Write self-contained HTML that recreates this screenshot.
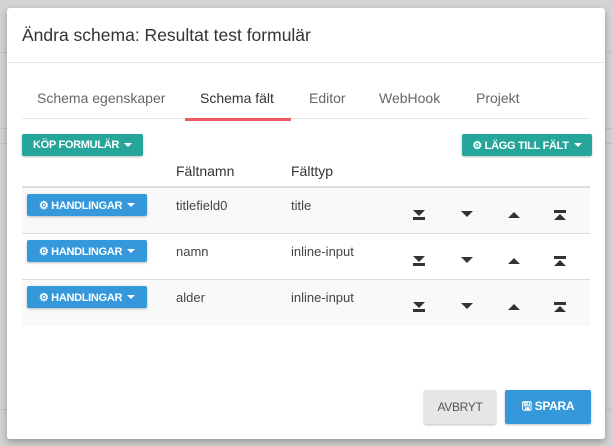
<!DOCTYPE html>
<html><head><meta charset="utf-8"><style>
body{margin:0;width:613px;height:446px;background:#d4d4d4;font-family:"Liberation Sans",sans-serif;position:relative;overflow:hidden}
.bgl{position:absolute;left:0;right:0;height:1px;background:#c4c4c4}
.modal{position:absolute;left:7px;top:8px;width:598px;height:431px;background:#fff;border-radius:3px;box-shadow:0 3px 8px rgba(0,0,0,.3)}
.a{position:absolute}
.hdr{left:0;top:0;width:598px;height:54px;border-bottom:1px solid #e8e8e8}
.title{left:15px;top:17px;font-size:17.5px;color:#333}
.tab{top:82px;font-size:14px;color:#666}
.btn{position:absolute;color:#fff;font-weight:bold;font-size:11px;border-radius:2px;box-shadow:0 1px 2px rgba(0,0,0,.25);display:flex;align-items:center;justify-content:center;gap:4px;letter-spacing:-.3px}
.teal{background:#26a69a}.blue{background:#3498db}
.car{display:inline-block;border-left:4px solid transparent;border-right:4px solid transparent;border-top:4px solid #fff;margin-left:1px}
.row{position:absolute;left:15px;width:568px;height:46px}
.cell{position:absolute;font-size:13px;color:#444}
</style></head><body>
<div class="bgl" style="top:52px"></div><div class="bgl" style="top:128px"></div><div class="bgl" style="top:143px"></div><div class="bgl" style="top:409px"></div>
<div class="modal">
<div class="a hdr"></div>
<div class="a title">Ändra schema: Resultat test formulär</div>
<div class="a" style="left:15px;top:110px;width:568px;height:1px;background:#e8e8e8"></div>
<div class="a tab" style="left:30px">Schema egenskaper</div>
<div class="a tab" style="left:193px;color:#333">Schema fält</div>
<div class="a tab" style="left:302px">Editor</div>
<div class="a tab" style="left:372px">WebHook</div>
<div class="a tab" style="left:469px">Projekt</div>
<div class="a" style="left:178px;top:110px;width:106px;height:3px;background:#ee5a5f"></div>
<div class="btn teal" style="left:15px;top:126px;width:121px;height:22px">KÖP FORMULÄR<span class="car"></span></div>
<div class="btn teal" style="left:455px;top:126px;width:130px;height:22px">⚙ LÄGG TILL FÄLT<span class="car"></span></div>
<div class="cell" style="left:169px;top:155px;font-size:14px;color:#333">Fältnamn</div>
<div class="cell" style="left:284px;top:155px;font-size:14px;color:#333">Fälttyp</div>
<div class="a" style="left:15px;top:178px;width:568px;height:2px;background:#ddd"></div>
<div class="row" style="top:180px;background:#f9f9f9;border-bottom:1px solid #ddd;height:45px"></div>
<div class="row" style="top:226px;border-bottom:1px solid #ddd;height:45px"></div>
<div class="row" style="top:272px;background:#f9f9f9"></div>
<script>
var ys=[180,226,272],n=["titlefield0","namn","alder"],t=["title","inline-input","inline-input"],h="";
for(var i=0;i<3;i++){var y=ys[i];
h+='<div class="btn blue" style="left:20px;top:'+(y+6)+'px;width:120px;height:22px">⚙ HANDLINGAR<span class="car"></span></div>';
h+='<div class="cell" style="left:169px;top:'+(y+10)+'px">'+n[i]+'</div><div class="cell" style="left:284px;top:'+(y+10)+'px">'+t[i]+'</div>';
var iy=y+22;
h+='<svg class="a" style="left:405px;top:'+iy+'px" width="14" height="10"><path d="M1 0h12L7 6zM1 7h12v3H1z" fill="#333"/></svg>';
h+='<svg class="a" style="left:453px;top:'+iy+'px" width="14" height="10"><path d="M1 1h12L7 7z" fill="#333"/></svg>';
h+='<svg class="a" style="left:500px;top:'+iy+'px" width="14" height="10"><path d="M1 8h12L7 2z" fill="#333"/></svg>';
h+='<svg class="a" style="left:546px;top:'+iy+'px" width="14" height="10"><path d="M1 0h12v3H1zM1 10h12L7 4z" fill="#333"/></svg>';}
document.write(h);
</script>
<div class="btn" style="left:417px;top:382px;width:72px;height:34px;background:#e6e6e6;color:#555;font-weight:normal;font-size:12px">AVBRYT</div>
<div class="btn blue" style="left:498px;top:382px;width:86px;height:34px;font-size:12px">🖫 SPARA</div>
</div>
</body></html>
